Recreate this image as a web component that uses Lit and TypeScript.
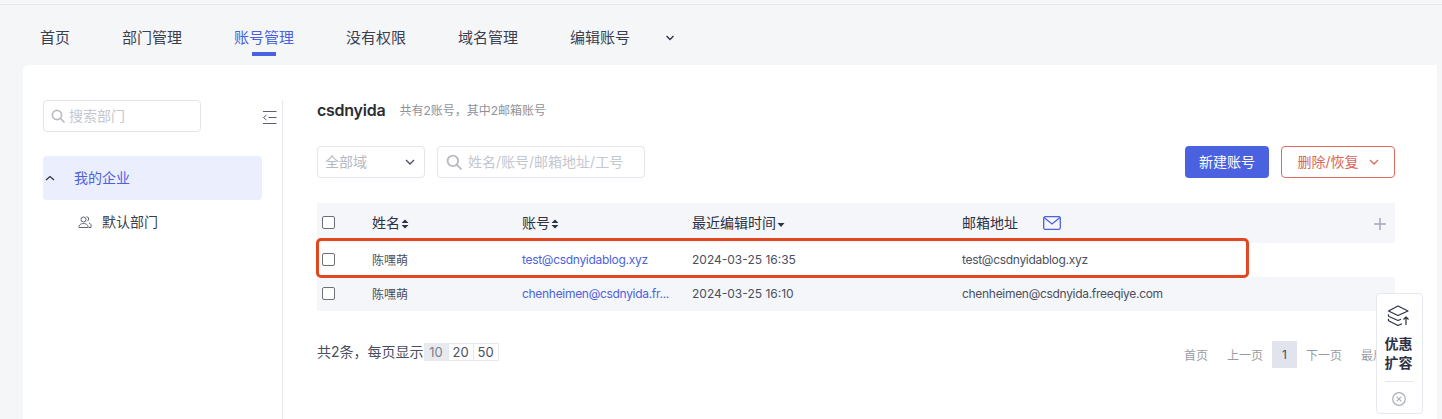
import { LitElement, html, css } from "lit";
import { customElement } from "lit/decorators.js";

const chev = (cls: string, d = "M1 1l4 4 4-4") => html`<svg class=${cls} width="10" height="6" viewBox="0 0 10 6" fill="none" stroke="currentColor" stroke-width="1.3"><path d=${d}/></svg>`;
const sort = html`<svg class="sort" width="8" height="10" viewBox="0 0 8 10" fill="#2c3145"><path d="M4 0.5L7.5 4H.5zM4 9.5L.5 6h7z"/></svg>`;
const glass = (s: number) => html`<svg class="glass" width=${s} height=${s} viewBox="0 0 14 14" fill="none" stroke="#b9bbc0" stroke-width="1.7"><circle cx="6" cy="6" r="4.6"/><path d="M9.5 9.5L13 13" stroke-linecap="round"/></svg>`;

@customElement("app-root")
export class AppRoot extends LitElement {
  static styles = css`
    :host { display: block; width: 1442px; height: 419px; overflow: hidden; background: #f5f6f8; position: relative;
      font-family: Inter, "Noto Sans CJK SC", sans-serif; color: #2c3145; }
    .topline { height: 4px; background: #f5f6f8; border-bottom: 1px solid #e6e8ef; }
    .tabs { display: flex; align-items: flex-start; height: 60px; padding-left: 40px; box-sizing: border-box; padding-top: 23px; font-size: 15px; color: #3a3f50; }
    .tab { line-height: 20px; width: 30px; white-space: nowrap; position: relative; }
    .tab + .tab { margin-left: 52px; }
    .tab.w { width: 60px; }
    .tab.on { color: #4b62e0; }
    .tab.on::after { content: ""; position: absolute; left: 18px; top: 24px; width: 24px; height: 4px; background: #4b62e0; }
    .more { margin-left: 35px; margin-top: 7px; color: #2c3145; display: flex; }
    .card { margin-left: 23px; width: 1414px; height: 354px; background: #fff; border-radius: 6px 0 0 0; display: flex; padding-top: 35px; box-sizing: border-box; }
    .side { width: 239px; flex: none; border-right: 1px solid #e6e8ef; padding-left: 20px; display: flex; flex-direction: column; }
    .side-top { display: flex; align-items: center; }
    .box { border: 1px solid #e3e5ec; border-radius: 4px; box-sizing: border-box; height: 32px; display: flex; align-items: center; font-size: 14px; color: #c4c7d0; background: #fff; }
    .box span, .active span, .child span, .btn span { margin-top: -2px; }
    .s-search { width: 158px; padding-left: 7px; gap: 4px; }
    .collapse { margin-left: 61px; margin-top: 3px; display: flex; }
    .active { width: 219px; height: 44px; margin-top: 24px; background: #ebeefd; border-radius: 4px; display: flex; align-items: center; font-size: 14px; color: #4b62e0; padding-left: 2px; box-sizing: border-box; }
    .active svg { color: #2c3145; margin-right: 19px; margin-top: -1px; }
    .child { display: flex; align-items: center; margin-top: 12px; margin-left: 35px; height: 20px; font-size: 14px; color: #3a3f50; gap: 10px; }
    .main { margin-left: 34px; width: 1078px; flex: none; display: flex; flex-direction: column; }
    .title { display: flex; align-items: center; height: 20px; }
    .title b { font-size: 16px; font-weight: 600; color: #2b2d33; letter-spacing: -0.25px; }
    .title span { font-size: 12px; color: #8f929b; margin-left: 14px; margin-top: -2px; }
    .filters { display: flex; margin-top: 26px; align-items: center; }
    .sel { width: 108px; padding: 0 9px 0 7px; justify-content: space-between; color: #b7b9c0; }
    .sel svg { color: #4a4f60; }
    .q { width: 208px; margin-left: 12px; padding-left: 8px; gap: 6px; }
    .spacer { flex: 1; }
    .btn { height: 32px; border-radius: 4px; box-sizing: border-box; display: flex; align-items: center; justify-content: center; font-size: 14px; }
    .primary { width: 84px; background: #4b62e0; color: #fff; }
    .danger { width: 114px; margin-left: 12px; border: 1px solid #dc6b60; color: #d8675c; gap: 10px; }
    table { border-collapse: collapse; margin-top: 25px; width: 1078px; table-layout: fixed; }
    th, td { padding: 0 0 2px; text-align: left; white-space: nowrap; }
    th { height: 38px; background: #f5f6f9; font-size: 14px; font-weight: 400; color: #2c3145; }
    td { height: 32px; font-size: 12px; color: #4a4f60; }
    td.mailaddr { letter-spacing: -0.3px; }
    tr.alt td { background: #f5f6f9; }
    .cb { display: block; width: 13px; height: 13px; margin-left: 5px; border: 1px solid #6e7078; border-radius: 2px; box-sizing: border-box; background: #fff; }
    .link { color: #4b62e0; }
    .sort { margin-left: 1px; vertical-align: -1px; }
    .mail { margin-left: 25px; vertical-align: -2px; }
    .plus { float: right; margin-right: 9px; margin-top: 6px; }
    .foot { display: flex; align-items: center; margin-top: 32px; font-size: 14px; color: #4a4f60; height: 18px; }
    .foot > span { margin-top: -2px; }
    .sizes { display: flex; font-size: 13px; height: 18px; }
    .sizes span { width: 26px; border: 1px solid #e6e8ef; box-sizing: border-box; display: flex; align-items: center; justify-content: center; color: #4a4f60; margin-right: -1px; }
    .sizes span.on { width: 25px; background: #e9eaf0; border-color: #e9eaf0; color: #7b7f8c; }
    .pager { display: flex; align-items: center; margin-left: auto; margin-right: -14px; font-size: 12px; color: #9a9ca3; margin-top: 4px; }
    .pager span { white-space: nowrap; }
    .pager .cur { width: 25px; height: 27px; display: flex; align-items: center; justify-content: center; background: #e1e4ec; color: #4a4f60; margin: 0 9px; }
    .pager .g { margin-right: 19px; }
    .highlight { position: absolute; left: 316px; top: 238px; width: 933px; height: 40px; box-sizing: border-box; border: 3px solid #e1481f; border-radius: 5px; pointer-events: none; }
    .widget { position: absolute; left: 1376px; top: 293px; width: 47px; height: 121px; box-sizing: border-box; background: #fff; border: 1px solid #e6e8ef; border-radius: 4px; display: flex; flex-direction: column; align-items: center; padding: 11px 2px 0 0; }
    .widget .t { font-size: 14px; font-weight: 600; line-height: 19px; color: #2c3145; text-align: center; margin-top: 7px; width: 28px; }
    .widget .hr { width: 28px; height: 1px; background: #e6e8ef; margin-top: 9px; }
    .widget .x { margin-top: 10px; display: flex; }
  `;

  render() {
    return html`
      <div class="topline"></div>
      <div class="tabs">
        <div class="tab">首页</div>
        <div class="tab w">部门管理</div>
        <div class="tab w on">账号管理</div>
        <div class="tab w">没有权限</div>
        <div class="tab w">域名管理</div>
        <div class="tab w">编辑账号</div>
        <div class="more">${chev("", "M1.5 1l3.500 3.500L8.500 1")}</div>
      </div>
      <div class="card">
        <aside class="side">
          <div class="side-top">
            <div class="box s-search">${glass(14)}<span>搜索部门</span></div>
            <span class="collapse"><svg width="15" height="15" viewBox="0 0 15 15" fill="none" stroke="#5c6070" stroke-width="1"><path d="M1 1.500h13.500M1 13.500h13.500M6.500 7.500h8M4.500 5L1.500 7.500l3 2.500"/></svg></span>
          </div>
          <div class="active">${chev("", "M1 5l4-3.500L9 5")}<span>我的企业</span></div>
          <div class="child">
            <svg width="14" height="14" viewBox="0 0 14 14" fill="none" stroke="#5c6070" stroke-width="1"><circle cx="5.500" cy="4.500" r="2.500"/><path d="M1 12.500c-.5-2.500 2-4 4.500-4s5 1.500 4.500 4zM8.500 1.800c2.200-.5 3 3 .8 4.500M11 8c1.700.5 2.500 2 2 4.500h-2.500"/></svg>
            <span>默认部门</span>
          </div>
        </aside>
        <section class="main">
          <div class="title"><b>csdnyida</b><span>共有2账号，其中2邮箱账号</span></div>
          <div class="filters">
            <div class="box sel"><span>全部域</span>${chev("")}</div>
            <div class="box q">${glass(16)}<span>姓名/账号/邮箱地址/工号</span></div>
            <div class="spacer"></div>
            <div class="btn primary"><span>新建账号</span></div>
            <div class="btn danger"><span>删除/恢复</span>${chev("")}</div>
          </div>
          <table>
            <colgroup><col style="width:55px"/><col style="width:150px"/><col style="width:170px"/><col style="width:270px"/><col/></colgroup>
            <tr>
              <th><span class="cb"></span></th>
              <th>姓名${sort}</th>
              <th>账号${sort}</th>
              <th>最近编辑时间<svg class="sort" width="8" height="10" viewBox="0 0 8 10" fill="#2c3145"><path d="M.5 4h7L4 8z"/></svg></th>
              <th>邮箱地址<svg class="mail" width="18" height="14" viewBox="0 0 18 14" fill="none" stroke="#4b62e0" stroke-width="1.300"><rect x=".7" y=".7" width="16.600" height="12.600" rx="1.500"/><path d="M1 1.500l8 6.500 8-6.500"/></svg>
                <svg class="plus" width="12" height="12" viewBox="0 0 12 12" stroke="#a3a8b6" stroke-width="1.500"><path d="M6 0v12M0 6h12"/></svg></th>
            </tr>
            <tr>
              <td><span class="cb"></span></td><td>陈嘿萌</td>
              <td class="link mailaddr">test@csdnyidablog.xyz</td><td>2024-03-25 16:35</td><td class="mailaddr">test@csdnyidablog.xyz</td>
            </tr>
            <tr class="alt">
              <td><span class="cb"></span></td><td>陈嘿萌</td>
              <td class="link mailaddr">chenheimen@csdnyida.fr...</td><td>2024-03-25 16:10</td><td class="mailaddr">chenheimen@csdnyida.freeqiye.com</td>
            </tr>
          </table>
          <div class="foot">
            <span>共2条，每页显示</span>
            <div class="sizes"><span class="on">10</span><span>20</span><span>50</span></div>
            <div class="pager">
              <span class="g">首页</span><span>上一页</span><span class="cur">1</span><span class="g">下一页</span><span>最后一页</span>
            </div>
          </div>
        </section>
      </div>
      <div class="highlight"></div>
      <div class="widget">
        <svg width="24" height="22" viewBox="0 0 24 22" fill="none" stroke="#2c3145" stroke-width="1.200" stroke-linejoin="round"><path d="M11 1L21 6l-10 4.500L1.500 6zM2 9.500c-1 .6-1 1.500 0 2l9 4 3-1.300M2 14c-1 .6-1 1.500 0 2l9 4.500 4-1.800M19 20V12M16.500 14.500L19 12l2.500 2.500"/></svg>
        <div class="t">优惠扩容</div>
        <div class="hr"></div>
        <span class="x"><svg width="14" height="14" viewBox="0 0 14 14" fill="none" stroke="#a9adb9" stroke-width="1.200"><circle cx="7" cy="7" r="6.300"/><path d="M4.800 4.800l4.400 4.400M9.200 4.800l-4.400 4.400"/></svg></span>
      </div>
    `;
  }
}
